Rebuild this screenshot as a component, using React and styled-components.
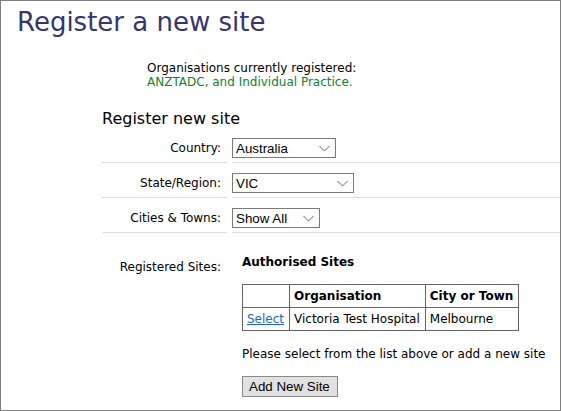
import React from "react";
import styled, { createGlobalStyle } from "styled-components";

const GlobalStyle = createGlobalStyle`
  html, body {
    margin: 0;
    padding: 0;
    background: #fff;
  }
  body {
    font-family: "DejaVu Sans", Verdana, sans-serif;
    font-size: 12px;
    color: #000;
  }
`;

const Page = styled.div`
  box-sizing: border-box;
  width: 561px;
  height: 411px;
  border: 1px solid #7f7f7f;
  overflow: hidden;
`;

const Title = styled.h1`
  margin: 6px 0 0 16px;
  font-size: 26px;
  line-height: 30px;
  font-weight: normal;
  color: #36366e;
`;

const Registered = styled.div`
  margin: 24px 0 0 146px;
  line-height: 14px;
`;

const OrgList = styled.div`
  color: #138030;
`;

const Form = styled.div`
  margin: 20px 0 0 101px;
`;

const FormTitle = styled.h2`
  margin: 0;
  font-size: 16px;
  line-height: 19px;
  font-weight: normal;
`;

const Row = styled.div`
  display: grid;
  grid-template-columns: 125px 1fr;
  column-gap: 5px;
`;

const Label = styled.div`
  display: flex;
  align-items: ${(p) => (p.$top ? "flex-start" : "center")};
  justify-content: flex-end;
  padding: ${(p) => (p.$top ? "27px 6px 0 0" : "10px 6px 4px 0")};
  line-height: 14px;
  border-bottom: ${(p) => (p.$last ? "none" : "1px solid #dedede")};
`;

const Field = styled.div`
  padding: ${(p) => (p.$block ? "22px 0 0 10px" : "10px 0 4px 0")};
  border-bottom: ${(p) => (p.$last ? "none" : "1px solid #dedede")};
`;

const SelectBox = styled.div`
  box-sizing: border-box;
  display: flex;
  align-items: center;
  justify-content: space-between;
  width: ${(p) => p.$width}px;
  height: 20px;
  padding: 0 5px 0 3px;
  border: 1px solid #7a7a7a;
  background: #fff;
  font-family: "Liberation Sans", Arial, sans-serif;
  font-size: 13.33px;
  color: #000;
`;

const SubHeading = styled.div`
  font-weight: bold;
  line-height: 14px;
`;

const Sites = styled.table`
  margin-top: 15px;
  border-collapse: collapse;
  line-height: 14px;

  th, td {
    border: 1px solid #666;
    padding: 4px 5px 4px 4px;
    text-align: left;
    white-space: nowrap;
  }

  th {
    font-weight: bold;
  }
`;

const SelectLink = styled.a`
  color: #2266cc;
  text-decoration: underline;
`;

const Hint = styled.div`
  margin-top: 16px;
  line-height: 14px;
`;

const Button = styled.button`
  margin-top: 15px;
  height: 21px;
  padding: 0 7px 0 6px;
  border: 1px solid #8a8a8a;
  background: #e1e1e1;
  font-family: "Liberation Sans", Arial, sans-serif;
  font-size: 13.33px;
  color: #000;
`;

const Chevron = () => (
  <svg width="11" height="7" viewBox="0 0 11 7">
    <path d="M0.5 1 L5.5 6 L10.5 1" fill="none" stroke="#666" strokeWidth="1" />
  </svg>
);

const Dropdown = ({ value, width }) => (
  <SelectBox $width={width}>
    <span>{value}</span>
    <Chevron />
  </SelectBox>
);

const App = () => {
  return (
    <Page>
      <GlobalStyle />
      <Title>Register a new site</Title>
      <Registered>
        <div>Organisations currently registered:</div>
        <OrgList>ANZTADC, and Individual Practice.</OrgList>
      </Registered>
      <Form>
        <FormTitle>Register new site</FormTitle>
        <Row>
          <Label>Country:</Label>
          <Field>
            <Dropdown value="Australia" width={104} />
          </Field>
        </Row>
        <Row>
          <Label>State/Region:</Label>
          <Field>
            <Dropdown value="VIC" width={122} />
          </Field>
        </Row>
        <Row>
          <Label>Cities &amp; Towns:</Label>
          <Field>
            <Dropdown value="Show All" width={88} />
          </Field>
        </Row>
        <Row>
          <Label $top $last>Registered Sites:</Label>
          <Field $block $last>
            <SubHeading>Authorised Sites</SubHeading>
            <Sites>
              <thead>
                <tr>
                  <th></th>
                  <th>Organisation</th>
                  <th>City or Town</th>
                </tr>
              </thead>
              <tbody>
                <tr>
                  <td>
                    <SelectLink href="#">Select</SelectLink>
                  </td>
                  <td>Victoria Test Hospital</td>
                  <td>Melbourne</td>
                </tr>
              </tbody>
            </Sites>
            <Hint>Please select from the list above or add a new site</Hint>
            <Button>Add New Site</Button>
          </Field>
        </Row>
      </Form>
    </Page>
  );
};

export default App;
